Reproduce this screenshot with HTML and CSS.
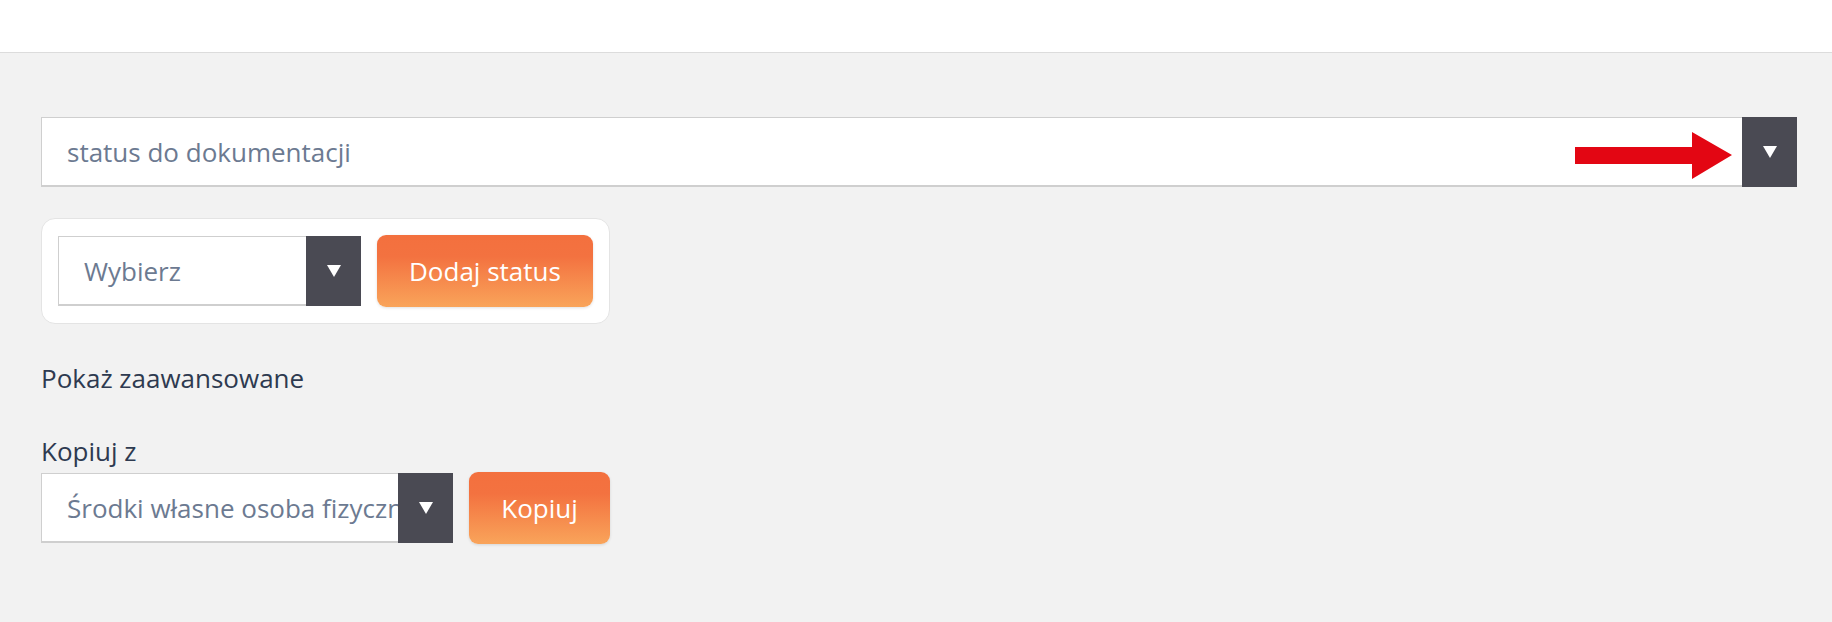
FILE: index.html
```html
<!DOCTYPE html>
<html lang="pl">
<head>
  <meta charset="UTF-8" />
  <meta name="viewport" content="width=device-width, initial-scale=1.0"/>
  <title>Statusy</title>
  <link rel="stylesheet" href="styles.css">
</head>
<body>
  <div class="topbar"></div>

  <div class="content">
    <div class="select select-wide">
      <span class="select-text">status do dokumentacji</span>
      <div class="select-btn">
        <svg width="16" height="14" viewBox="0 0 16 14"><polygon points="1,1 15,1 8,13" fill="#fff"/></svg>
      </div>
      <svg class="hint-arrow" width="158" height="48" viewBox="0 0 158 48">
        <polygon points="0,15 117,15 117,0 157,23 117,47 117,32 0,32" fill="#e30613"/>
      </svg>
    </div>

    <div class="card">
      <div class="select select-small">
        <span class="select-text">Wybierz</span>
        <div class="select-btn">
          <svg width="16" height="14" viewBox="0 0 16 14"><polygon points="1,1 15,1 8,13" fill="#fff"/></svg>
        </div>
      </div>
      <button class="btn">Dodaj status</button>
    </div>

    <a class="advanced">Pokaż zaawansowane</a>

    <div class="copy">
      <label class="copy-label">Kopiuj z</label>
      <div class="copy-row">
        <div class="select select-copy">
          <span class="select-text">Środki własne osoba fizyczna</span>
          <div class="select-btn">
            <svg width="16" height="14" viewBox="0 0 16 14"><polygon points="1,1 15,1 8,13" fill="#fff"/></svg>
          </div>
        </div>
        <button class="btn btn-copy">Kopiuj</button>
      </div>
    </div>
  </div>
</body>
</html>
```

FILE: styles.css
```css
* {
  margin: 0;
  padding: 0;
  box-sizing: border-box;
  font-family: 'Open Sans', 'Noto Sans', sans-serif;
}

body {
  background: #f2f2f2;
  color: #2e3a50;
}

.topbar {
  height: 53px;
  background: #fff;
  border-bottom: 1px solid #dcdcdc;
}

.content {
  padding: 64px 35px 40px 41px;
  display: flex;
  flex-direction: column;
  align-items: flex-start;
}

.select {
  display: flex;
  align-items: stretch;
  height: 70px;
  background: #fff;
  border: 1px solid #cfcfcf;
  border-bottom-width: 2px;
  position: relative;
}

.select-text {
  flex: 1;
  display: flex;
  align-items: center;
  padding-left: 25px;
  font-size: 26px;
  color: #6c7a91;
  white-space: nowrap;
  overflow: hidden;
}

.select-btn {
  width: 55px;
  margin: -1px -1px -2px 0;
  background: #4a4a53;
  display: flex;
  align-items: center;
  justify-content: center;
}

.select-wide {
  width: 100%;
}

.hint-arrow {
  position: absolute;
  right: 63px;
  top: 14px;
}

.card {
  margin-top: 31px;
  display: flex;
  align-items: center;
  gap: 16px;
  padding: 16px;
  background: #fff;
  border: 1px solid #e4e4e4;
  border-radius: 14px;
}

.select-small {
  width: 303px;
}

.btn {
  height: 72px;
  padding: 0 32px;
  border: none;
  border-radius: 9px;
  background: linear-gradient(180deg, #f3703e 0%, #f37240 30%, #f9a45a 100%);
  color: #fff;
  font-size: 26px;
  box-shadow: 0 1px 3px rgba(0, 0, 0, 0.12);
}

.advanced {
  margin-top: 36px;
  font-size: 26px;
  color: #2e3a50;
}

.copy {
  margin-top: 38px;
}

.copy-label {
  display: block;
  font-size: 26px;
  color: #2e3a50;
  line-height: 34px;
}

.copy-row {
  display: flex;
  align-items: center;
  gap: 16px;
  margin-top: 4px;
}

.select-copy {
  width: 412px;
}

.btn-copy {
  width: 141px;
  padding: 0;
}
```
